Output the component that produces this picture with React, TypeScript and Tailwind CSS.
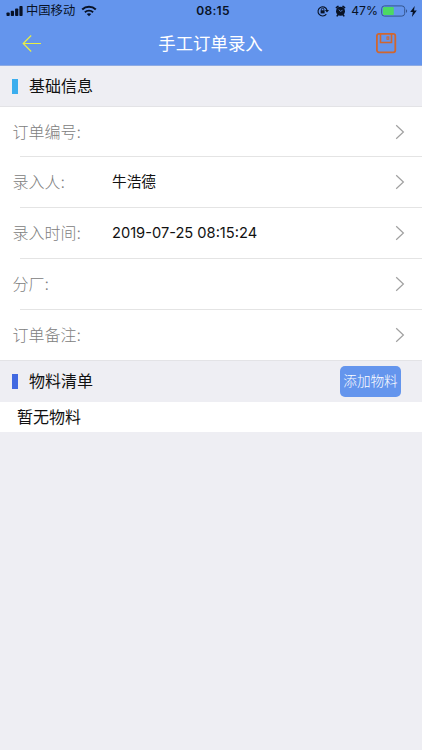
import React from 'react';

const fields = [
  { label: '订单编号:', value: '' },
  { label: '录入人:', value: '牛浩德' },
  { label: '录入时间:', value: '2019-07-25 08:15:24' },
  { label: '分厂:', value: '' },
  { label: '订单备注:', value: '' },
];

function StatusBar() {
  return (
    <div className="grid h-[22px] grid-cols-[1fr_auto_1fr] items-center pl-[6px] pr-[5px] text-[#081226]">
      <div className="flex items-center">
        <svg width="17" height="11" viewBox="0 0 17 11" fill="currentColor">
          <rect x="0.5" y="6.5" width="3.2" height="3.5" rx="0.8" />
          <rect x="4.8" y="4.8" width="3.2" height="5.2" rx="0.8" />
          <rect x="9.1" y="2.5" width="3.2" height="7.5" rx="0.8" />
          <rect x="13.4" y="0" width="3.2" height="10" rx="0.8" />
        </svg>
        <span className="ml-[3px] text-[12.3px] leading-[22px]">中国移动</span>
        <svg className="ml-[6px]" width="16" height="12" viewBox="0 0 16 12" fill="none" stroke="currentColor">
          <path d="M1.2 4.4C5 .8 11 .8 14.8 4.4" strokeWidth="2" />
          <path d="M3.9 7.2C6.2 5.1 9.8 5.1 12.1 7.2" strokeWidth="1.9" />
          <path d="M8 11.2 5.8 8.9c1.2-1 3.2-1 4.4 0z" fill="currentColor" stroke="none" />
        </svg>
      </div>

      <span className="ml-[3px] text-[12px] font-semibold tracking-[0.3px]">08:15</span>

      <div className="flex items-center justify-end">
        {/* Rotation lock */}
        <svg width="12" height="12" viewBox="0 0 12 12" fill="none" stroke="currentColor">
          <path d="M9.3 9.2A4.6 4.6 0 1 1 10 5" strokeWidth="1.1" />
          <path d="M7.9 5h4.1L10 7.5z" fill="currentColor" stroke="none" />
          <rect x="3.6" y="5.3" width="4" height="3.1" fill="currentColor" stroke="none" />
          <path d="M4.4 5.6V4.4a1.2 1.2 0 0 1 2.4 0v1.2" strokeWidth="0.9" />
        </svg>
        {/* Alarm */}
        <svg className="ml-[6px]" width="11" height="12" viewBox="0 0 11 12">
          <circle cx="5.5" cy="6.3" r="4.5" fill="currentColor" />
          <path d="M1.4 2.6 3 1.4M9.6 2.6 8 1.4M2.8 10l-.6.8M8.2 10l.6.8" stroke="currentColor" strokeWidth="1.6" strokeLinecap="round" />
          <path d="M3.7 4.6 5.5 6.3 7.5 5.3" fill="none" stroke="#6495ed" strokeWidth="0.8" />
        </svg>
        <span className="ml-[5px] text-[12.2px] leading-[22px]">47%</span>
        <svg className="ml-[3px]" width="27" height="12" viewBox="0 0 27 12">
          <rect x="0.7" y="0.9" width="23" height="10.2" rx="2.8" fill="none" stroke="#35568f" strokeWidth="1" />
          <rect x="2" y="2" width="10.8" height="8" rx="1" fill="#4cd964" />
          <path d="M25 4.2c1.5.5 1.5 3.1 0 3.6z" fill="#35568f" />
        </svg>
        <svg className="ml-[2px]" width="7" height="11" viewBox="0 0 7 11" fill="currentColor">
          <path d="M4.7 0 .2 6h2.6l-.9 5L6.8 4.4H4z" />
        </svg>
      </div>
    </div>
  );
}

function Header() {
  return (
    <header className="h-[66px] border-b border-[#8eabe3] bg-[#6495ed]">
      <StatusBar />
      <div className="grid h-[43px] grid-cols-[1fr_auto_1fr] items-center pl-[22px] pr-[25px]">
        <svg className="-mt-[2px]" width="20" height="18" viewBox="0 0 20 18" fill="none" stroke="#e8ee45" strokeWidth="1.2">
          <path d="M19 9.5H1.2M9.2 1.5 1.2 9.5l8 8" />
        </svg>
        <h1 className="ml-[2px] text-[17.4px] leading-[43px] text-white">手工订单录入</h1>
        <svg className="-mt-[2px] justify-self-end" width="22" height="22" viewBox="0 0 22 22" fill="none" stroke="#d0662f" strokeWidth="1.8">
          <rect x="1.9" y="1.9" width="18.4" height="18.4" rx="2" />
          <path d="M5.5 2v8.5h11V2" strokeWidth="1.6" />
          <rect x="12" y="4.9" width="1.8" height="2.4" strokeWidth="1" />
        </svg>
      </div>
    </header>
  );
}

type SectionTitleProps = {
  title: string;
  marker: string;
  children?: React.ReactNode;
};

function SectionTitle({ title, marker, children }: SectionTitleProps) {
  return (
    <div className="flex h-full items-center pl-3">
      <span className={`h-[15px] w-[6px] ${marker}`} />
      <h2 className="ml-[11px] text-[16px] leading-6 text-[#111]">{title}</h2>
      {children}
    </div>
  );
}

export default function App() {
  return (
    <div className="h-[750px] w-full overflow-hidden bg-[#eeeef3] font-['Inter','Noto_Sans_CJK_SC',sans-serif]">
      <Header />

      <div className="h-[41px] border-b border-[#e3e3e6]">
        <SectionTitle title="基础信息" marker="bg-[#3baeee]" />
      </div>

      <div className="bg-white">
        {fields.map((field) => (
          <div key={field.label} className="group flex h-[51px] flex-col first:h-[50px] last:h-[50px]">
            <div className="flex flex-1 items-center pl-[12.5px] pr-[17px]">
              <span className="w-[99.5px] text-[16px] font-light leading-6 text-[#808080]">{field.label}</span>
              <span className="flex-1 text-[14.65px] leading-6 text-[#111]">{field.value}</span>
              <svg width="10" height="16" viewBox="0 0 10 16" fill="none" stroke="#a0a0a0" strokeWidth="1.2">
                <path d="M1.2 1.2 8.4 8l-7.2 6.8" />
              </svg>
            </div>
            <div className="ml-5 h-px bg-[#e4e4e4] group-last:hidden" />
          </div>
        ))}
      </div>

      <div className="h-[42px] border-t border-[#e3e3e6] pb-px">
        <SectionTitle title="物料清单" marker="bg-[#4169e1]">
          <button className="ml-auto mr-[21px] h-[31px] w-[61px] rounded-[5px] bg-[#6495ed] text-[13.6px] font-light text-white">
            添加物料
          </button>
        </SectionTitle>
      </div>

      <p className="h-[30px] bg-white pl-[17px] text-[16px] leading-[31px] text-[#111]">暂无物料</p>
    </div>
  );
}
